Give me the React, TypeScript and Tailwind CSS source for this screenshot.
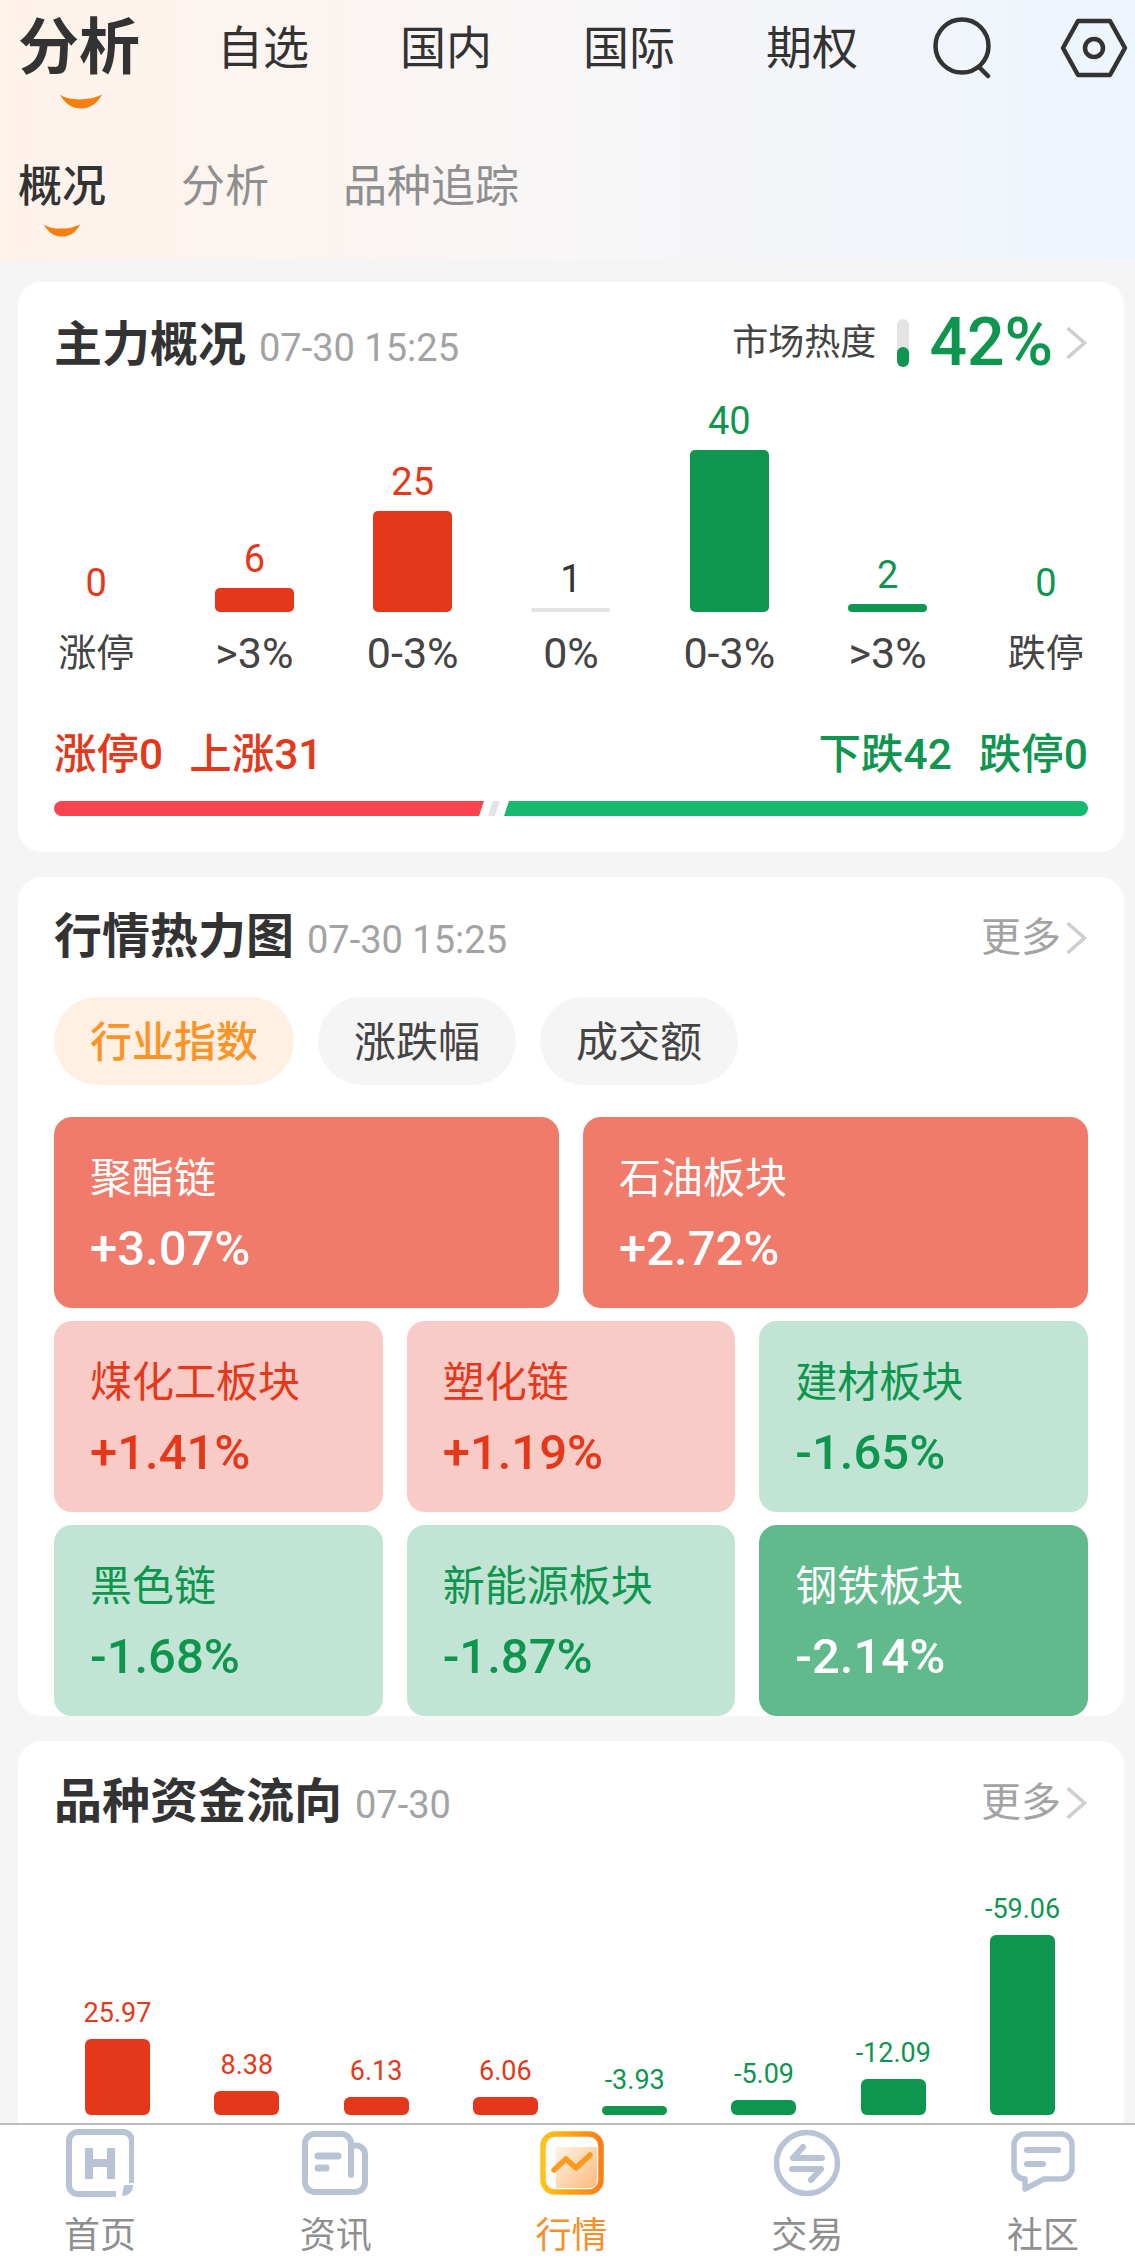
const font = '[font-family:Roboto,"Noto_Sans_CJK_SC",sans-serif]';

const RED = "text-[#e5381a]";
const GREEN = "text-[#0e964f]";

function Smile({ className }: { className: string }) {
    return (
        <svg viewBox="0 0 44 16" className={className}>
            <path d="M1 1.5 C 10 8, 30 8, 43 1.5 C 38 11, 31 15.5, 22 15.5 C 13 15.5, 6 11, 1 1.5 Z" fill="#f57f0f" />
        </svg>
    );
}

function Chevron({ className }: { className: string }) {
    return (
        <svg viewBox="0 0 22 34" className={className} fill="none">
            <path d="M3 3 L19 17 L3 31" stroke="#cfcfcf" strokeWidth="3.4" />
        </svg>
    );
}

function CardTitle({ title, date, right }: { title: string; date: string; right: React.ReactNode }) {
    return (
        <div className="flex h-[60px] items-center justify-between">
            <div className="flex items-baseline">
                <span className="text-[48px] leading-[60px] font-bold text-[#333333]">{title}</span>
                <span className="ml-[13px] text-[38px] leading-[60px] text-[#a3a3a3]">{date}</span>
            </div>
            {right}
        </div>
    );
}

function More() {
    return (
        <div className="flex items-center">
            <span className="text-[40px] leading-[50px] text-[#a3a3a3]">更多</span>
            <Chevron className="ml-[3px] h-[36px] w-[24px]" />
        </div>
    );
}

const overview = [
    { value: "0", label: "涨停", height: 0, color: RED, bar: "", size: "text-[38px]" },
    { value: "6", label: ">3%", height: 24, color: RED, bar: "bg-[#e5381a]", size: "text-[43px]" },
    { value: "25", label: "0-3%", height: 101, color: RED, bar: "bg-[#e5381a]", size: "text-[43px]" },
    { value: "1", label: "0%", height: 4, color: "text-[#333333]", bar: "bg-[#e3e3e3]", size: "text-[43px]" },
    { value: "40", label: "0-3%", height: 162, color: GREEN, bar: "bg-[#0e964f]", size: "text-[43px]" },
    { value: "2", label: ">3%", height: 8, color: GREEN, bar: "bg-[#0e964f]", size: "text-[43px]" },
    { value: "0", label: "跌停", height: 0, color: GREEN, bar: "", size: "text-[38px]" },
];

const tiles = [
    [
        { name: "聚酯链", pct: "+3.07%", cls: "bg-[#f07b6a] text-white" },
        { name: "石油板块", pct: "+2.72%", cls: "bg-[#f07b6a] text-white" },
    ],
    [
        { name: "煤化工板块", pct: "+1.41%", cls: "bg-[#f9cbc6] text-[#e5381a]" },
        { name: "塑化链", pct: "+1.19%", cls: "bg-[#f9cbc6] text-[#e5381a]" },
        { name: "建材板块", pct: "-1.65%", cls: "bg-[#c2e4d4] text-[#0e964f]" },
    ],
    [
        { name: "黑色链", pct: "-1.68%", cls: "bg-[#c2e4d4] text-[#0e964f]" },
        { name: "新能源板块", pct: "-1.87%", cls: "bg-[#c2e4d4] text-[#0e964f]" },
        { name: "钢铁板块", pct: "-2.14%", cls: "bg-[#60ba8b] text-white" },
    ],
];

const flows = [
    { value: "25.97", height: 76, up: true },
    { value: "8.38", height: 24, up: true },
    { value: "6.13", height: 18, up: true },
    { value: "6.06", height: 18, up: true },
    { value: "-3.93", height: 9, up: false },
    { value: "-5.09", height: 15, up: false },
    { value: "-12.09", height: 36, up: false },
    { value: "-59.06", height: 180, up: false },
];

function HomeIcon() {
    return (
        <svg viewBox="0 0 68 68" className="h-[68px] w-[68px]" fill="none">
            <path d="M66 54 V12 A9 9 0 0 0 57 3 H12 A9 9 0 0 0 3 12 V56 A9 9 0 0 0 12 65 H50" stroke="#b8c3d6" strokeWidth="6" />
            <path d="M58 56 H67 V57 A10 10 0 0 1 57 67 H56 Z" fill="#b8c3d6" />
            <path d="M23 19 V50 M45 19 V50 M23 34 H45" stroke="#b8c3d6" strokeWidth="8" />
        </svg>
    );
}

function NewsIcon() {
    return (
        <svg viewBox="0 0 68 68" className="h-[68px] w-[68px]" fill="none" stroke="#b8c3d6" strokeWidth="6" strokeLinecap="round">
            <path d="M49 46 V14 A10 10 0 0 0 39 5 H13 A10 10 0 0 0 3 14 V53 A10 10 0 0 0 13 63 H53 A10 10 0 0 0 63 53 V25 A9 9 0 0 0 51 17" />
            <path d="M16 27 H36 M16 39 H24" strokeWidth="7" />
        </svg>
    );
}

function MarketIcon() {
    return (
        <svg viewBox="0 0 64 64" className="h-[64px] w-[64px]" fill="none">
            <defs>
                <linearGradient id="ring" x1="0" y1="0" x2="1" y2="0">
                    <stop offset="0" stopColor="#ffc21a" />
                    <stop offset="1" stopColor="#fb7f16" />
                </linearGradient>
                <linearGradient id="fill" x1="0" y1="0" x2="1" y2="1">
                    <stop offset="0" stopColor="#fff3e6" />
                    <stop offset="1" stopColor="#fdb97c" />
                </linearGradient>
            </defs>
            <path d="M16 16 H57 V50 A7 7 0 0 1 50 57 H16 Z" fill="url(#fill)" />
            <rect x="3" y="3" width="58" height="58" rx="12" stroke="url(#ring)" strokeWidth="5.5" />
            <path d="M14 39 L26 28 L36 37 L50 24" stroke="#fb9a1e" strokeWidth="5.5" strokeLinecap="round" strokeLinejoin="round" />
        </svg>
    );
}

function TradeIcon() {
    return (
        <svg viewBox="0 0 68 68" className="h-[68px] w-[68px]" fill="none" stroke="#b8c3d6" strokeWidth="5.5" strokeLinecap="round">
            <circle cx="34" cy="34" r="30.5" />
            <path d="M20 29 H49 M20 29 L30 18 M48 40 H19 M48 40 L38 51" strokeWidth="6" />
        </svg>
    );
}

function SocialIcon() {
    return (
        <svg viewBox="0 0 64 64" className="h-[64px] w-[64px]" fill="none" stroke="#b8c3d6" strokeWidth="5.5" strokeLinecap="round" strokeLinejoin="round">
            <path d="M14 3 H50 A11 11 0 0 1 61 14 V37 A11 11 0 0 1 50 48 H33 L14 58 V48 A11 11 0 0 1 3 37 V14 A11 11 0 0 1 14 3 Z" />
            <path d="M16 19 H47 M16 33 H32" strokeWidth="6" />
        </svg>
    );
}

const navItems = [
    { label: "首页", icon: <HomeIcon />, active: false },
    { label: "资讯", icon: <NewsIcon />, active: false },
    { label: "行情", icon: <MarketIcon />, active: true },
    { label: "交易", icon: <TradeIcon />, active: false },
    { label: "社区", icon: <SocialIcon />, active: false },
];

export default function App() {
    return (
        <div className={`flex h-[2256px] w-[1135px] flex-col overflow-hidden bg-[#f5f5f5] ${font}`}>
            <div className="min-h-0 flex-1 overflow-hidden">
                {/* top header */}
                <div className="h-[260px] bg-gradient-to-r from-[#fff3ea] via-[#f8f6f7] to-[#eef5fe] pl-[18px]">
                    <div className="flex h-[90px] items-center pt-[6px]">
                        <span className="w-[199px] text-[61px] leading-[90px] font-bold text-[#333333]">分析</span>
                        <div className="flex text-[46px] leading-[90px] text-[#333333]">
                            <span className="w-[183px]">自选</span>
                            <span className="w-[183px]">国内</span>
                            <span className="w-[183px]">国际</span>
                            <span className="w-[167px]">期权</span>
                        </div>
                        <svg viewBox="0 0 60 62" className="h-[62px] w-[60px]" fill="none" stroke="#333333" strokeWidth="4.5" strokeLinecap="round">
                            <circle cx="29" cy="29" r="26.5" />
                            <path d="M46 50 L55 59" />
                        </svg>
                        <svg viewBox="0 0 68 60" className="ml-[67px] h-[60px] w-[68px]" fill="none" stroke="#333333" strokeWidth="4.5" strokeLinejoin="round">
                            <path d="M18 3 H50 L65 30 L50 57 H18 L3 30 Z" />
                            <circle cx="34" cy="30" r="9" />
                        </svg>
                    </div>
                    <Smile className="mt-[3px] ml-[41px] h-[16px] w-[44px]" />
                    <div className="mt-[48px] flex items-center text-[44px] leading-[60px] text-[#8f8f8f]">
                        <span className="w-[163px] font-medium text-[#333333]">概况</span>
                        <span className="w-[162px]">分析</span>
                        <span>品种追踪</span>
                    </div>
                    <Smile className="mt-[6px] ml-[25px] h-[14px] w-[38px]" />
                </div>

                {/* 主力概况 */}
                <section className="mt-[22px] mr-[11px] ml-[18px] h-[570px] rounded-[24px] bg-white px-[36px] pt-[34px]">
                    <CardTitle
                        title="主力概况"
                        date="07-30 15:25"
                        right={
                            <div className="-mt-[6px] flex items-center">
                                <span className="text-[36px] leading-[50px] text-[#444444]">市场热度</span>
                                <div className="ml-[21px] flex h-[48px] w-[12px] items-end rounded-full bg-[#e3e3e3]">
                                    <div className="h-[20px] w-full rounded-full bg-[#0e964f]" />
                                </div>
                                <span className="ml-[20px] text-[66px] leading-[60px] font-medium text-[#0e964f]">42%</span>
                                <Chevron className="ml-[11px] h-[36px] w-[24px]" />
                            </div>
                        }
                    />
                    <div className="mt-[23px] grid h-[213px] grid-cols-7 items-end gap-x-[74px]">
                        {overview.map((item, i) => (
                            <div key={i} className="flex flex-col items-center">
                                <span className={`mb-[7px] text-[38px] leading-[44px] ${item.color}`}>{item.value}</span>
                                {item.height > 0 && (
                                    <div
                                        className={`w-[79px] rounded-[5px] ${item.bar}`}
                                        style={{ height: item.height }}
                                    />
                                )}
                            </div>
                        ))}
                    </div>
                    <div className="mt-[18px] grid grid-cols-7 gap-x-[74px] leading-[46px] text-[#444444]">
                        {overview.map((item, i) => (
                            <div key={i} className="flex justify-center">
                                <span className={`whitespace-nowrap ${item.size}`}>{item.label}</span>
                            </div>
                        ))}
                    </div>
                    <div className="mt-[51px] flex justify-between text-[42.5px] leading-[56px] font-medium">
                        <div className={`flex gap-[26px] ${RED}`}>
                            <span>涨停0</span>
                            <span>上涨31</span>
                        </div>
                        <div className={`flex gap-[27px] ${GREEN}`}>
                            <span>下跌42</span>
                            <span>跌停0</span>
                        </div>
                    </div>
                    <div className="mt-[18px] flex h-[15px] items-stretch">
                        <div className="w-[430px] rounded-l-full bg-[#f7444e] [clip-path:polygon(0_0,100%_0,calc(100%-5px)_100%,0_100%)]" />
                        <div className="ml-[4px] w-[12px] bg-[#e3e3e3] [clip-path:polygon(5px_0,100%_0,calc(100%-5px)_100%,0_100%)]" />
                        <div className="ml-[4px] min-w-0 flex-1 rounded-r-full bg-[#16b96e] [clip-path:polygon(5px_0,100%_0,100%_100%,0_100%)]" />
                    </div>
                </section>

                {/* 行情热力图 */}
                <section className="mt-[25px] mr-[11px] ml-[18px] h-[839px] rounded-[24px] bg-white px-[36px] pt-[31px]">
                    <CardTitle title="行情热力图" date="07-30 15:25" right={<More />} />
                    <div className="mt-[29px] flex gap-[24px] text-[42px] leading-[92px] text-[#444444]">
                        <span className="h-[88px] rounded-[44px] bg-[#fff0e3] px-[36px] font-medium text-[#fb9427]">行业指数</span>
                        <span className="h-[88px] rounded-[44px] bg-[#f5f5f5] px-[36px]">涨跌幅</span>
                        <span className="h-[88px] rounded-[44px] bg-[#f5f5f5] px-[36px]">成交额</span>
                    </div>
                    <div className="mt-[32px] flex flex-col gap-[13px]">
                        {tiles.map((row, i) => (
                            <div key={i} className="flex gap-[24px]">
                                {row.map((tile) => (
                                    <div
                                        key={tile.name}
                                        className={`h-[191px] min-w-0 flex-1 rounded-[18px] pt-[33px] pl-[36px] ${tile.cls}`}
                                    >
                                        <div className="text-[42px] leading-[58px]">{tile.name}</div>
                                        <div className="mt-[12px] text-[49px] leading-[58px] font-medium">{tile.pct}</div>
                                    </div>
                                ))}
                            </div>
                        ))}
                    </div>
                </section>

                {/* 品种资金流向 */}
                <section className="mt-[25px] mr-[11px] ml-[18px] h-[500px] rounded-t-[24px] bg-white px-[36px] pt-[32px]">
                    <CardTitle title="品种资金流向" date="07-30" right={<More />} />
                    <div className="mt-[10px] ml-[31px] flex h-[272px] w-[975px] items-end gap-x-[64.3px]">
                        {flows.map((item) => (
                            <div key={item.value} className="flex w-[65px] flex-col items-center">
                                <span
                                    className={`mb-[10px] text-[27px] leading-[32px] whitespace-nowrap ${item.up ? RED : GREEN}`}
                                >
                                    {item.value}
                                </span>
                                <div
                                    className={`w-[65px] rounded-[6px] ${item.up ? "bg-[#e5381a]" : "bg-[#0e964f]"}`}
                                    style={{ height: item.height }}
                                />
                            </div>
                        ))}
                    </div>
                </section>
            </div>

            {/* bottom nav */}
            <nav className="flex h-[133px] shrink-0 justify-between border-t-2 border-[#bdbdbd] bg-white pt-[3px] pr-[56px] pl-[64px]">
                {navItems.map((item) => (
                    <div key={item.label} className="flex w-[72px] flex-col items-center">
                        <div className="flex h-[70px] w-[70px] items-center justify-center">{item.icon}</div>
                        <span
                            className={`mt-[18px] text-[36px] leading-[40px] ${item.active ? "text-[#f98e2b]" : "text-[#8f8f8f]"}`}
                        >
                            {item.label}
                        </span>
                    </div>
                ))}
            </nav>
        </div>
    );
}
